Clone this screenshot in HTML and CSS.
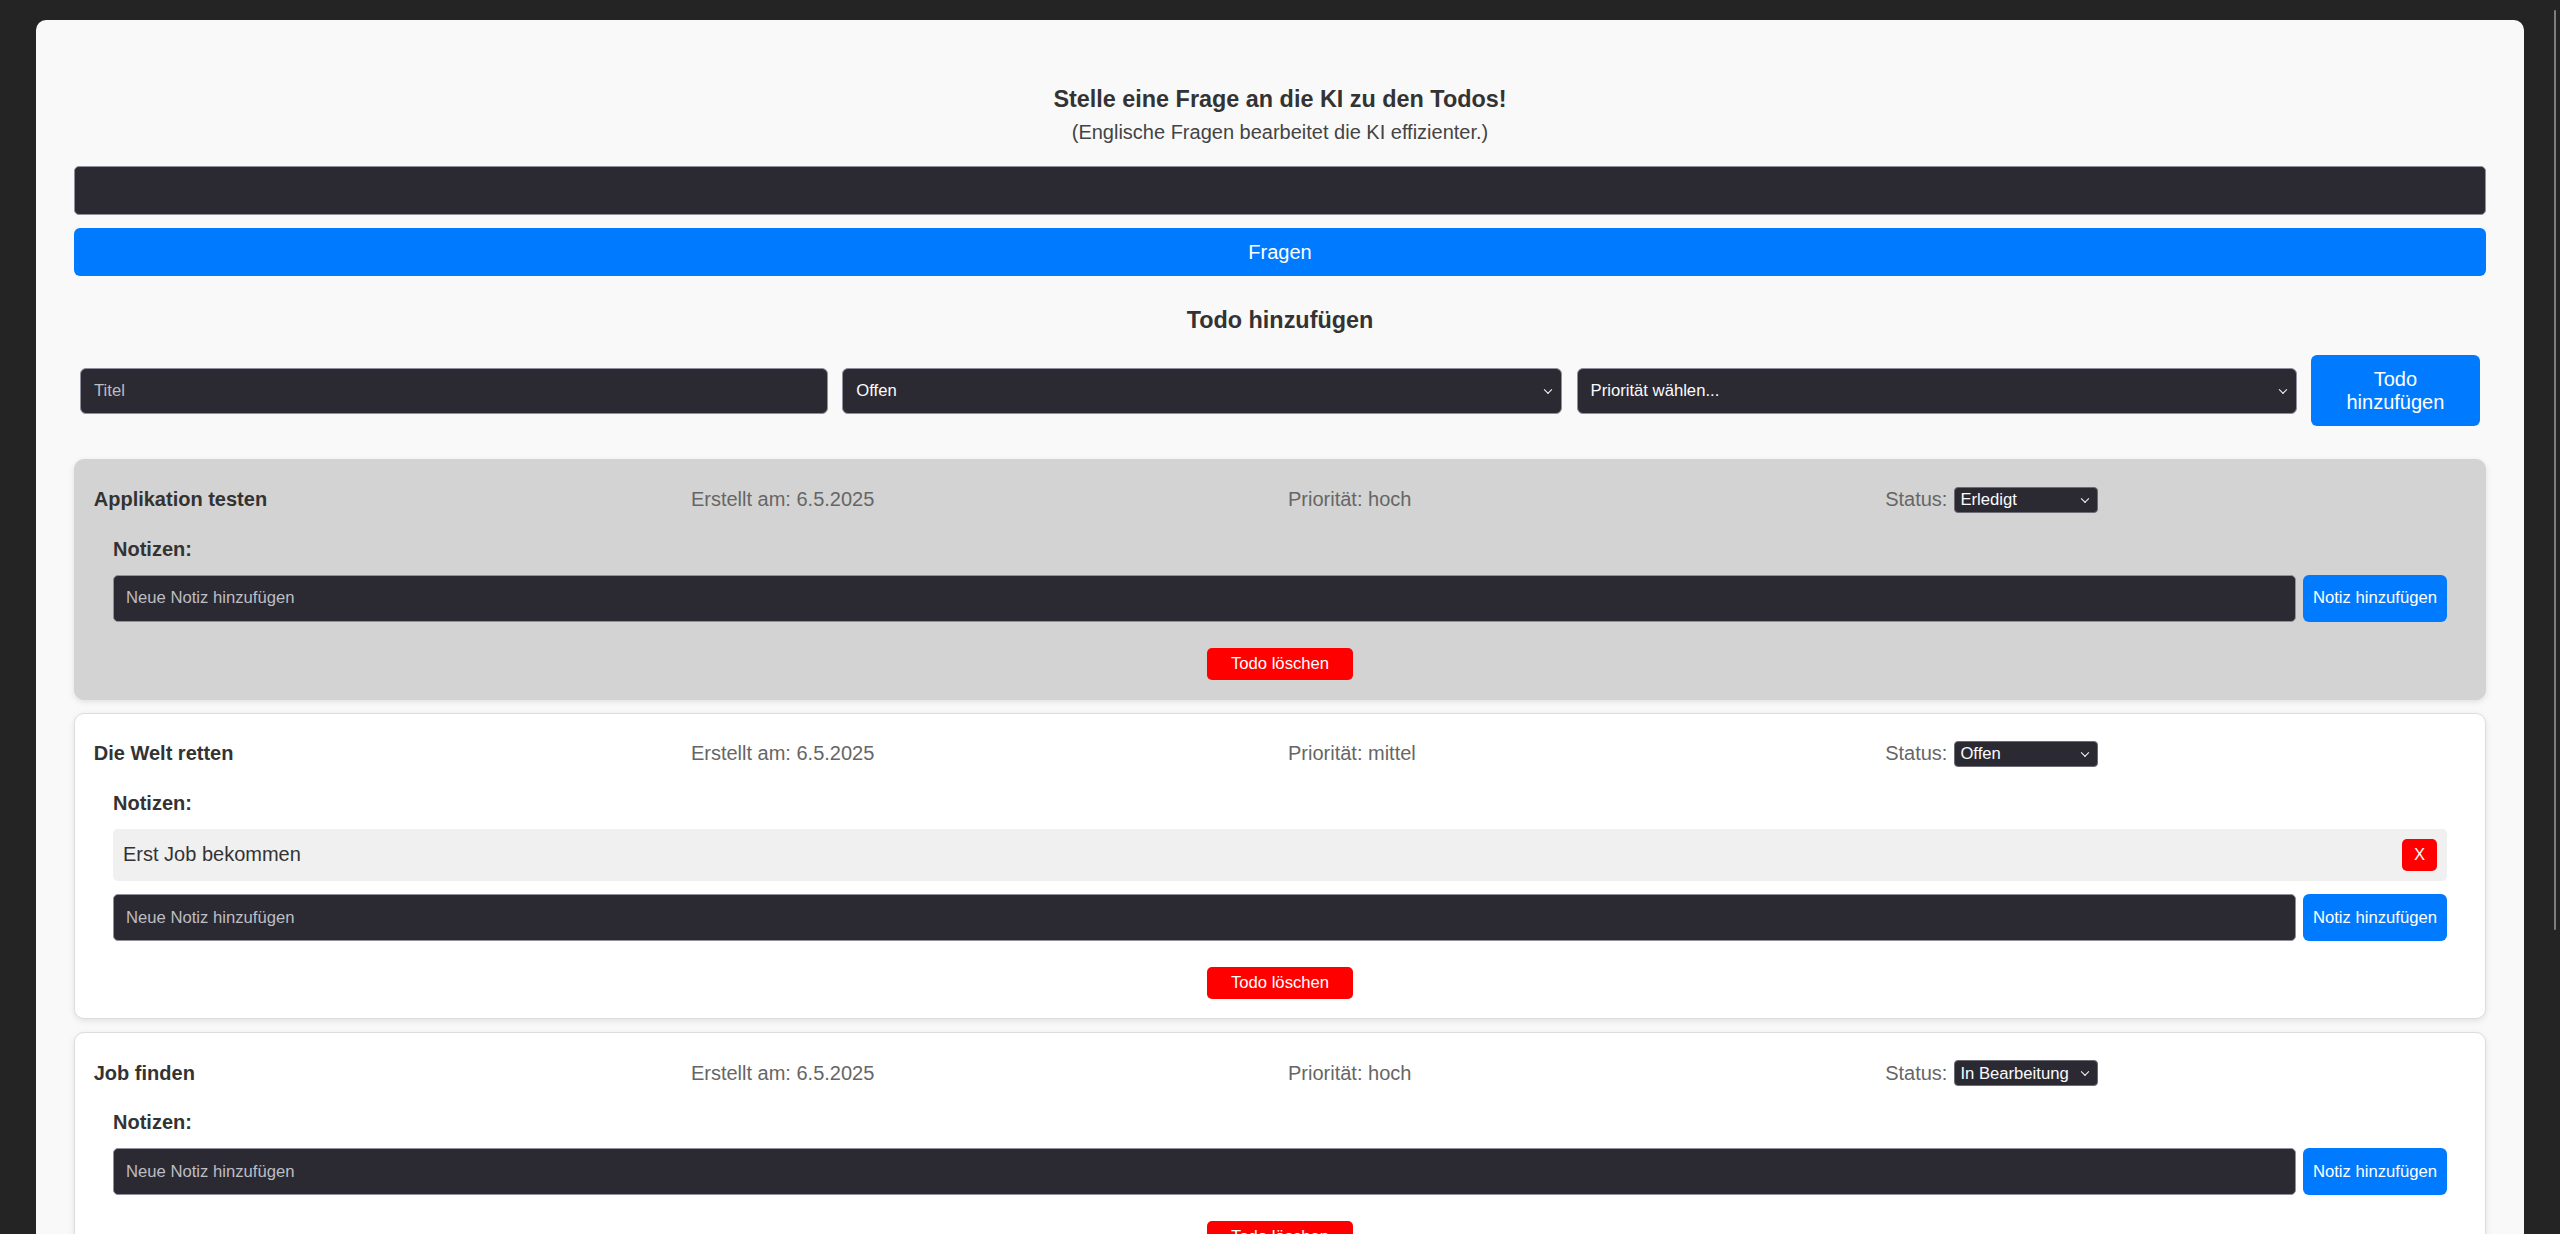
FILE: index.html
```html
<!DOCTYPE html>
<html lang="de">
<head>
<meta charset="utf-8">
<title>Todos</title>
<link rel="stylesheet" href="styles.css">
</head>
<body>
<div class="app">
  <section class="ask">
    <h3 class="ask-title">Stelle eine Frage an die KI zu den Todos!</h3>
    <p class="ask-hint">(Englische Fragen bearbeitet die KI effizienter.)</p>
    <input class="ask-input" type="text">
    <button class="btn-primary ask-btn" type="button">Fragen</button>
  </section>

  <h3 class="form-title">Todo hinzufügen</h3>
  <form class="todo-form">
    <input class="field field-title" type="text" placeholder="Titel">
    <span class="select-wrap field-select">
      <select class="field"><option>Offen</option></select>
    </span>
    <span class="select-wrap field-select">
      <select class="field"><option>Priorität wählen...</option></select>
    </span>
    <button class="btn-add" type="button">Todo hinzufügen</button>
  </form>

  <div class="todo-list">
    <div class="todo todo-done">
      <div class="todo-header">
        <span class="todo-title">Applikation testen</span>
        <span class="todo-meta">Erstellt am: 6.5.2025</span>
        <span class="todo-meta">Priorität: hoch</span>
        <span class="todo-meta todo-status">Status:
          <span class="select-wrap status-select"><select><option>Erledigt</option></select></span>
        </span>
      </div>
      <div class="notes">
        <h4 class="notes-title">Notizen:</h4>
        <div class="note-form">
          <input type="text" placeholder="Neue Notiz hinzufügen">
          <button class="btn-note" type="button">Notiz hinzufügen</button>
        </div>
      </div>
      <div class="todo-actions"><button class="btn-delete" type="button">Todo löschen</button></div>
    </div>

    <div class="todo">
      <div class="todo-header">
        <span class="todo-title">Die Welt retten</span>
        <span class="todo-meta">Erstellt am: 6.5.2025</span>
        <span class="todo-meta">Priorität: mittel</span>
        <span class="todo-meta todo-status">Status:
          <span class="select-wrap status-select"><select><option>Offen</option></select></span>
        </span>
      </div>
      <div class="notes">
        <h4 class="notes-title">Notizen:</h4>
        <ul class="note-list">
          <li class="note"><span>Erst Job bekommen</span><button class="btn-x" type="button">X</button></li>
        </ul>
        <div class="note-form">
          <input type="text" placeholder="Neue Notiz hinzufügen">
          <button class="btn-note" type="button">Notiz hinzufügen</button>
        </div>
      </div>
      <div class="todo-actions"><button class="btn-delete" type="button">Todo löschen</button></div>
    </div>

    <div class="todo">
      <div class="todo-header">
        <span class="todo-title">Job finden</span>
        <span class="todo-meta">Erstellt am: 6.5.2025</span>
        <span class="todo-meta">Priorität: hoch</span>
        <span class="todo-meta todo-status">Status:
          <span class="select-wrap status-select"><select><option>In Bearbeitung</option></select></span>
        </span>
      </div>
      <div class="notes">
        <h4 class="notes-title">Notizen:</h4>
        <div class="note-form">
          <input type="text" placeholder="Neue Notiz hinzufügen">
          <button class="btn-note" type="button">Notiz hinzufügen</button>
        </div>
      </div>
      <div class="todo-actions"><button class="btn-delete" type="button">Todo löschen</button></div>
    </div>
  </div>
</div>
<div class="scroll-thumb"></div>
</body>
</html>
```

FILE: styles.css
```css
* { box-sizing: border-box; }

html, body {
  margin: 0;
  height: 1234px;
  overflow: hidden;
}

body {
  background: #242424;
  font-family: "Liberation Sans", Arial, sans-serif;
  font-size: 20px;
  color: #333;
}

.app {
  margin: 20px 36px 0;
  padding: 38px;
  background: #f9f9f9;
  border-radius: 10px;
}

input, select, button {
  font-family: "Liberation Sans", Arial, sans-serif;
  font-size: 16.67px;
  margin: 0;
}

/* Ask section */
.ask { text-align: center; }

.ask-title, .form-title {
  font-size: 23.4px;
  line-height: 27px;
  font-weight: bold;
  color: #333;
  text-align: center;
}

.ask-title { margin: 28px 0 0; }

.ask-hint {
  margin: 8px 0 0;
  line-height: 23px;
  color: #444;
}

.ask-input {
  display: block;
  width: 100%;
  height: 49px;
  margin-top: 22px;
  background: #2b2a33;
  border: 1px solid #8f8f9d;
  border-radius: 5px;
  color: #fbfbfe;
  padding: 0 12px;
}

.btn-primary {
  display: block;
  width: 100%;
  height: 48px;
  margin-top: 13px;
  background: #007bff;
  color: #fff;
  border: none;
  border-radius: 6px;
  font-size: 20px;
}

/* Add form */
.form-title { margin: 30.5px 0 0; }

.todo-form {
  display: flex;
  align-items: center;
  gap: 14.3px;
  margin-top: 21.5px;
  padding: 0 6px;
}

.field {
  height: 46px;
  background: #2b2a33;
  border: 1px solid #8f8f9d;
  border-radius: 6px;
  color: #fbfbfe;
  padding: 0 13px;
}

.field-title { flex: 0 0 748px; }

.field-select { flex: 0 0 720px; }

.field-select select { width: 100%; }

::placeholder { color: #bdbdc2; opacity: 1; }

.select-wrap {
  position: relative;
  display: inline-block;
}

.select-wrap select {
  appearance: none;
  -webkit-appearance: none;
  display: block;
}

.select-wrap::after {
  content: "";
  position: absolute;
  right: 11px;
  top: 50%;
  width: 5px;
  height: 5px;
  border-right: 1.5px solid #fbfbfe;
  border-bottom: 1.5px solid #fbfbfe;
  transform: translateY(-70%) rotate(45deg);
  pointer-events: none;
}

.btn-add {
  flex: 0 0 169px;
  height: 71px;
  padding: 0 18px;
  background: #007bff;
  color: #fff;
  border: none;
  border-radius: 6px;
  font-size: 20px;
  line-height: 23px;
}

/* Todo cards */
.todo-list { margin-top: 32.5px; }

.todo {
  background: #fff;
  border: 1px solid #ddd;
  border-radius: 10px;
  padding: 17px 18.75px 19px;
  margin-bottom: 13px;
  box-shadow: 0 2px 6px rgba(0, 0, 0, 0.1);
}

.todo-done {
  background: #d3d3d3;
  border-color: #d3d3d3;
}

.todo-header {
  display: grid;
  grid-template-columns: repeat(4, 1fr);
  column-gap: 16px;
  align-items: center;
  height: 46px;
}

.todo-title {
  font-weight: bold;
  color: #333;
}

.todo-meta { color: #666; }

.todo-status {
  display: flex;
  align-items: center;
  gap: 7px;
}

.status-select select {
  width: 144px;
  height: 26px;
  padding: 0 5px;
  background: #2b2a33;
  color: #fbfbfe;
  border: 1px solid #6b6b75;
  border-radius: 4px;
}

.status-select::after { right: 10px; }

.notes { margin: 0 19.25px; }

.notes-title {
  margin: 14px 0 14px;
  font-size: 20px;
  line-height: 24px;
  font-weight: bold;
  color: #333;
}

.note-list {
  list-style: none;
  margin: 0;
  padding: 0;
}

.note {
  display: flex;
  align-items: center;
  justify-content: space-between;
  height: 52px;
  padding: 0 10px;
  margin-bottom: 13.5px;
  background: #f0f0f0;
  border-radius: 5px;
  color: #333;
}

.btn-x {
  height: 32px;
  padding: 0 12px;
  background: #ff0000;
  color: #fff;
  border: none;
  border-radius: 5px;
}

.note-form {
  display: flex;
  align-items: stretch;
  gap: 7px;
  height: 47px;
  margin-top: 3px;
}

.note-form input {
  flex: 1;
  min-width: 0;
  padding: 0 12px;
  background: #2b2a33;
  color: #fbfbfe;
  border: 1px solid #8f8f9d;
  border-radius: 5px;
}

.btn-note {
  flex: 0 0 auto;
  padding: 0 10px;
  white-space: nowrap;
  background: #007bff;
  color: #fff;
  border: none;
  border-radius: 6px;
}

.todo-actions {
  margin-top: 26px;
  text-align: center;
  line-height: 0;
}

.btn-delete {
  height: 32px;
  padding: 0 24px;
  background: #ff0000;
  color: #fff;
  border: none;
  border-radius: 5px;
  line-height: normal;
}

.scroll-thumb {
  position: fixed;
  top: 10px;
  right: 4px;
  width: 2px;
  height: 920px;
  background: #7d7d7d;
  border-radius: 1px;
}
```
